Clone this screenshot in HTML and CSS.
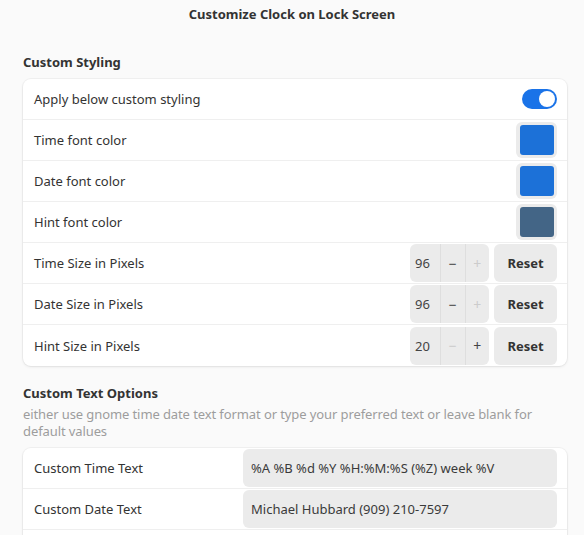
FILE: index.html
```html
<!DOCTYPE html>
<html lang="en">
<head>
<meta charset="utf-8">
<title>Customize Clock on Lock Screen</title>
<link rel="stylesheet" href="styles.css">
</head>
<body>
<header class="titlebar">Customize Clock on Lock Screen</header>
<main class="page">
  <h2 class="group-title first">Custom Styling</h2>
  <section class="card">
    <div class="row">
      <span class="label">Apply below custom styling</span>
      <span class="switch on"><span class="knob"></span></span>
    </div>
    <div class="row">
      <span class="label">Time font color</span>
      <span class="color-btn"><span class="swatch swatch-blue"></span></span>
    </div>
    <div class="row">
      <span class="label">Date font color</span>
      <span class="color-btn"><span class="swatch swatch-blue"></span></span>
    </div>
    <div class="row">
      <span class="label">Hint font color</span>
      <span class="color-btn"><span class="swatch swatch-slate"></span></span>
    </div>
    <div class="row">
      <span class="label">Time Size in Pixels</span>
      <div class="controls">
        <div class="spin">
          <span class="spin-value">96</span>
          <span class="spin-btn">&minus;</span>
          <span class="spin-btn disabled">+</span>
        </div>
        <button class="btn">Reset</button>
      </div>
    </div>
    <div class="row">
      <span class="label">Date Size in Pixels</span>
      <div class="controls">
        <div class="spin">
          <span class="spin-value">96</span>
          <span class="spin-btn">&minus;</span>
          <span class="spin-btn disabled">+</span>
        </div>
        <button class="btn">Reset</button>
      </div>
    </div>
    <div class="row">
      <span class="label">Hint Size in Pixels</span>
      <div class="controls">
        <div class="spin">
          <span class="spin-value">20</span>
          <span class="spin-btn disabled">&minus;</span>
          <span class="spin-btn">+</span>
        </div>
        <button class="btn">Reset</button>
      </div>
    </div>
  </section>

  <h2 class="group-title second">Custom Text Options</h2>
  <p class="group-desc">either use gnome time date text format or type your preferred text or leave blank for default values</p>
  <section class="card open">
    <div class="row">
      <span class="label">Custom Time Text</span>
      <span class="entry">%A %B %d %Y %H:%M:%S (%Z) week %V</span>
    </div>
    <div class="row">
      <span class="label">Custom Date Text</span>
      <span class="entry">Michael Hubbard (909) 210-7597</span>
    </div>
  </section>
</main>
</body>
</html>
```
FILE: styles.css
```css
* { box-sizing: border-box; }

html, body {
  margin: 0;
  padding: 0;
  background: #fafafa;
  overflow: hidden;
}

body {
  font-family: "Noto Sans", "Open Sans", sans-serif;
  font-size: 13px;
  color: #333333;
  height: 535px;
}

.titlebar {
  height: 28px;
  line-height: 28px;
  text-align: center;
  font-weight: 700;
  font-size: 13px;
  color: #333333;
}

.page {
  padding: 0 17px 0 23px;
}

.group-title {
  margin: 0;
  font-size: 13px;
  font-weight: 700;
  line-height: 20px;
  color: #333333;
}

.group-title.first { margin-top: 24px; margin-bottom: 7px; }
.group-title.second { margin-top: 17px; margin-bottom: 3px; }

.group-desc {
  margin: 0 0 8px;
  font-size: 13px;
  line-height: 17px;
  letter-spacing: -0.1px;
  color: #9d9d9d;
}

.card {
  background: #ffffff;
  border-radius: 8px;
  box-shadow: 0 0 0 1px rgba(0, 0, 0, 0.035), 0 1px 3px rgba(0, 0, 0, 0.08);
  overflow: hidden;
}

.card.open {
  padding-bottom: 40px;
}

.row {
  height: 41px;
  display: flex;
  align-items: center;
  justify-content: space-between;
  padding: 0 10px 0 11px;
  border-bottom: 1px solid #efefef;
}

.card:not(.open) .row:last-child { border-bottom: none; }

.label { white-space: nowrap; }

.switch {
  width: 35px;
  height: 20px;
  border-radius: 10px;
  background: #1a73e8;
  display: flex;
  align-items: center;
  justify-content: flex-end;
  padding: 0 2px;
}

.knob {
  width: 16px;
  height: 16px;
  border-radius: 50%;
  background: #ffffff;
}

.color-btn {
  width: 41px;
  height: 36px;
  padding: 3px 3px 3px 4px;
  border-radius: 6px;
  background: #ebebeb;
  display: flex;
}

.swatch {
  flex: 1;
  border-radius: 3px;
}

.swatch-blue { background: #1c71d8; }
.swatch-slate { background: #436586; }

.controls {
  display: flex;
  gap: 5px;
  height: 38px;
}

.spin {
  display: flex;
  width: 79px;
  background: #ebebeb;
  border-radius: 6px;
  overflow: hidden;
}

.spin-value {
  width: 31px;
  padding-left: 5px;
  display: flex;
  align-items: center;
  border-right: 1px solid #dedede;
  color: #444444;
}

.spin-btn {
  flex: 1;
  display: flex;
  align-items: center;
  justify-content: center;
  color: #444444;
  font-size: 14px;
}

.spin-btn + .spin-btn { border-left: 1px solid #dedede; }

.spin-btn.disabled { color: #cccccc; }

.btn {
  width: 63px;
  border: none;
  border-radius: 6px;
  background: #ebebeb;
  font-family: inherit;
  font-size: 13px;
  font-weight: 700;
  color: #333333;
  padding: 0;
}

.entry {
  flex: 0 0 314px;
  height: 38px;
  line-height: 38px;
  padding-left: 8px;
  background: #ebebeb;
  border-radius: 6px;
  white-space: nowrap;
  color: #3a3a3a;
}
```
